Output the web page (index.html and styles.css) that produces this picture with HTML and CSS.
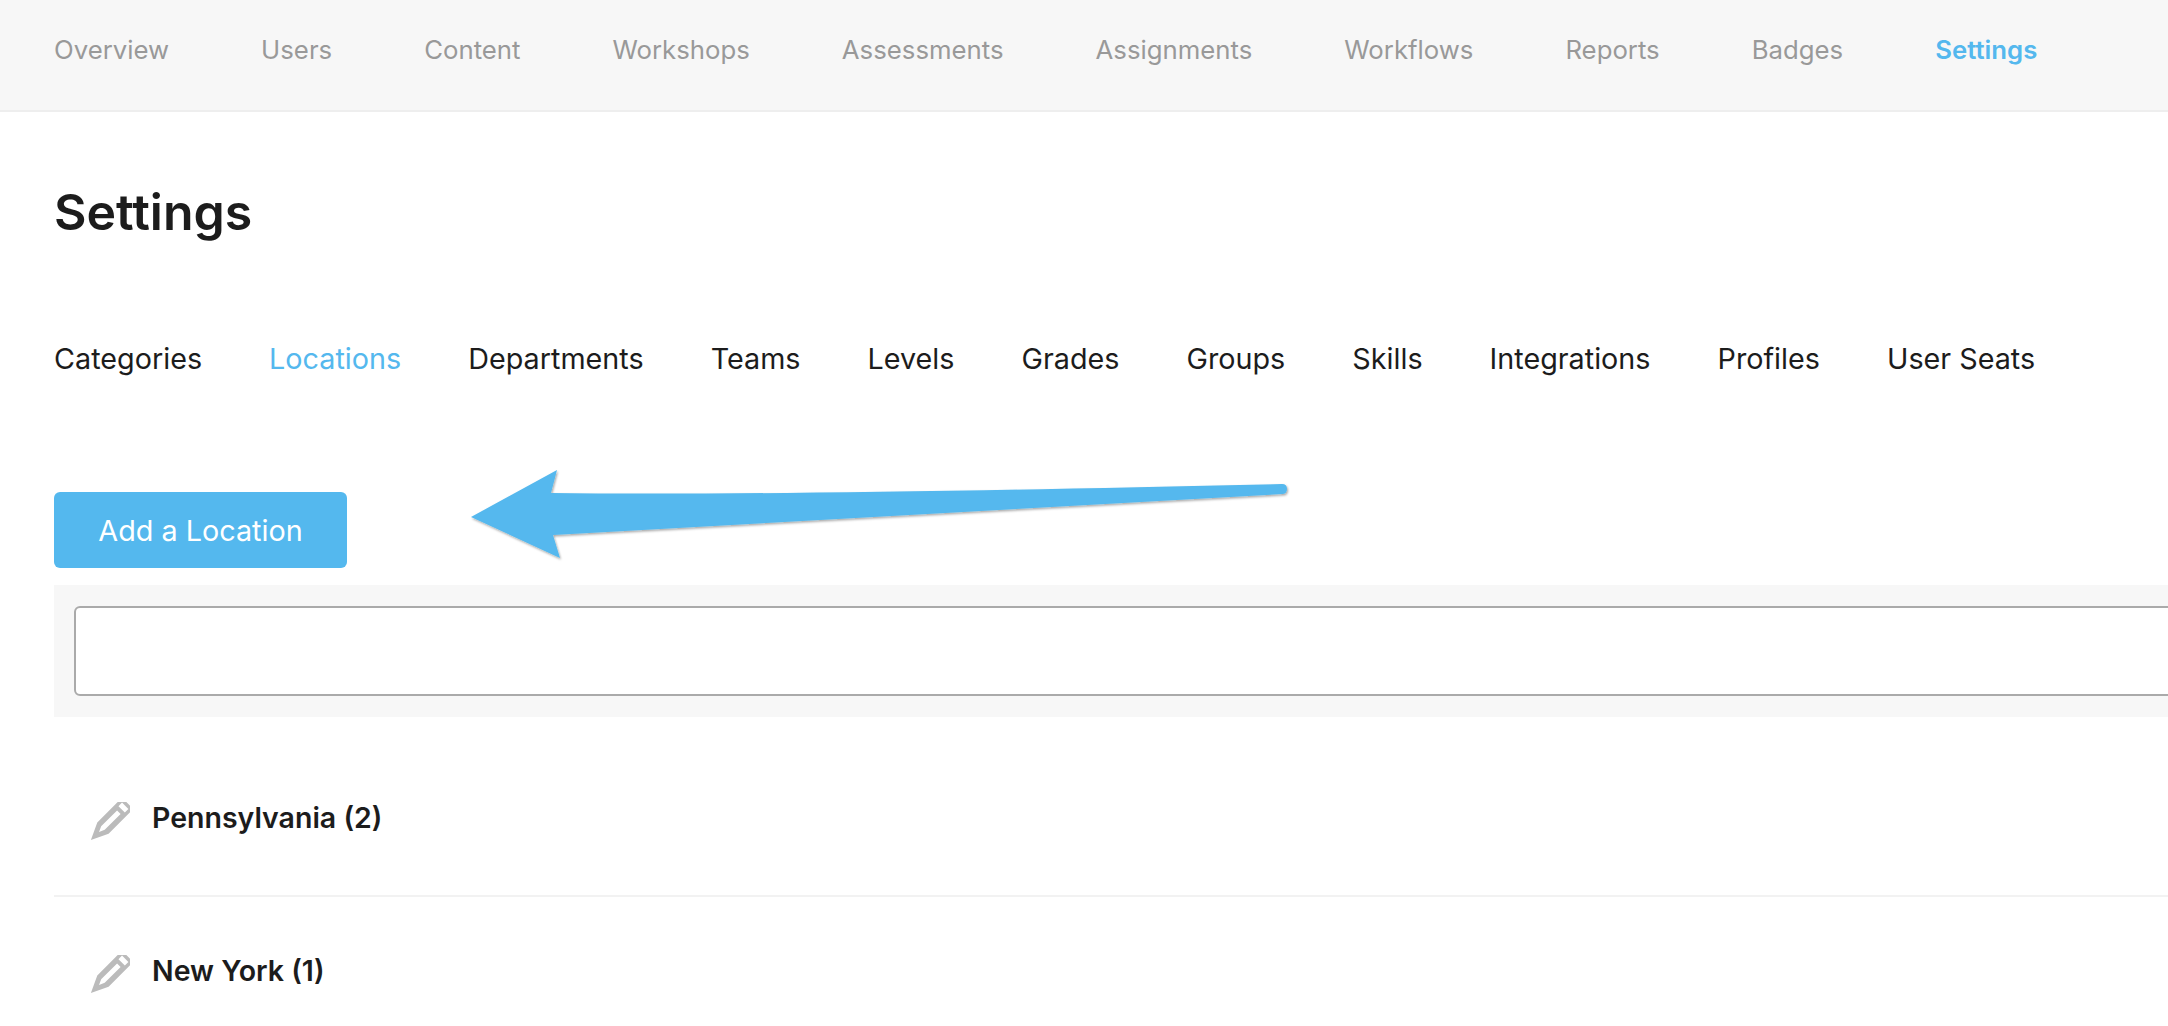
FILE: index.html
```html
<!DOCTYPE html>
<html lang="en">
<head>
    <meta charset="UTF-8">
    <title>Settings</title>
    <link rel="stylesheet" href="styles.css">
</head>
<body>
    <nav class="topnav">
        <a href="#">Overview</a>
        <a href="#">Users</a>
        <a href="#">Content</a>
        <a href="#">Workshops</a>
        <a href="#">Assessments</a>
        <a href="#">Assignments</a>
        <a href="#">Workflows</a>
        <a href="#">Reports</a>
        <a href="#">Badges</a>
        <a href="#" class="active">Settings</a>
    </nav>
    <main class="content">
        <h1>Settings</h1>
        <div class="tabs">
            <a href="#">Categories</a>
            <a href="#" class="active">Locations</a>
            <a href="#">Departments</a>
            <a href="#">Teams</a>
            <a href="#">Levels</a>
            <a href="#">Grades</a>
            <a href="#">Groups</a>
            <a href="#">Skills</a>
            <a href="#">Integrations</a>
            <a href="#">Profiles</a>
            <a href="#">User Seats</a>
        </div>
        <button class="add-btn">Add a Location</button>
        <div class="search-bar">
            <input type="text" class="search-input">
        </div>
        <ul class="locations">
            <li>
                <svg class="pencil" viewBox="0 0 40 40"><use href="#pencil-icon"/></svg>
                <span>Pennsylvania (2)</span>
            </li>
            <li>
                <svg class="pencil" viewBox="0 0 40 40"><use href="#pencil-icon"/></svg>
                <span>New York (1)</span>
            </li>
        </ul>
    </main>

    <!-- annotation drawn over the page -->
    <svg class="arrow" width="840" height="110" viewBox="0 0 840 110">
        <defs>
            <filter id="arrow-shadow" x="-5%" y="-20%" width="110%" height="140%">
                <feDropShadow dx="1" dy="1.5" stdDeviation="1" flood-color="#000" flood-opacity="0.35"/>
            </filter>
            <g id="pencil-icon" transform="translate(20 19) rotate(45)">
                <path fill="#bbb" fill-rule="evenodd" d="M-8 -20 Q-8 -25 -3 -25 L3 -25 Q8 -25 8 -20 L8 10 L0 27 L-8 10 Z M-4.5 -21.5 L-4.5 -16.5 L4.5 -16.5 L4.5 -21.5 Z M-2.5 -12.5 L-2.5 10 L0 15.5 L2.5 10 L2.5 -12.5 Z"/>
            </g>
        </defs>
        <path filter="url(#arrow-shadow)" fill="#54b8ee" d="M1 47 L87 0 L81 23 Q300 26 812 14 Q817 14 817 19 Q817 24 812 24 L83 65 L90 88 Z"/>
    </svg>
</body>
</html>
```

FILE: styles.css
```css
body {
    margin: 0;
    font-family: Inter, "Noto Sans", sans-serif;
    background: #fff;
    color: #1c1c1c;
    overflow: hidden;
}
a {
    text-decoration: none;
    color: inherit;
}
.topnav {
    display: flex;
    align-items: center;
    gap: 92px;
    box-sizing: border-box;
    height: 112px;
    padding: 0 0 11px 54px;
    background: #f7f7f7;
    border-bottom: 2px solid #eee;
    font-size: 25.75px;
    color: #999;
}
.topnav .active {
    color: #54b8ee;
    font-weight: 600;
}
.content {
    padding-left: 54px;
}
h1 {
    margin: 0;
    padding-top: 70px;
    font-size: 50px;
    line-height: 60px;
    font-weight: 600;
}
.tabs {
    display: flex;
    gap: 67px;
    margin-top: 97px;
    font-size: 28.75px;
    line-height: 40px;
}
.tabs .active {
    color: #54b8ee;
}
.add-btn {
    display: block;
    width: 293px;
    height: 76px;
    margin-top: 113px;
    border: none;
    border-radius: 6px;
    background: #54b8ee;
    color: #fff;
    font-family: inherit;
    font-size: 28.75px;
    cursor: pointer;
}
.search-bar {
    margin-top: 17px;
    padding: 21px 0 21px 20px;
    background: #f7f7f7;
    overflow: hidden;
}
.search-input {
    display: block;
    box-sizing: border-box;
    width: calc(100% + 20px);
    height: 90px;
    background: #fff;
    border: 2px solid #aaa;
    border-radius: 6px;
}
.locations {
    list-style: none;
    margin: 28px 0 0;
    padding: 0;
}
.locations li {
    display: flex;
    align-items: center;
    gap: 22px;
    box-sizing: border-box;
    height: 152px;
    padding: 0 0 6px 36px;
    border-bottom: 2px solid #f2f2f2;
    font-size: 28.5px;
    font-weight: 600;
}
.locations li:last-child {
    border-bottom: none;
}
.pencil {
    width: 40px;
    height: 40px;
    margin-top: 10px;
}
.arrow {
    position: absolute;
    left: 470px;
    top: 470px;
}
```
